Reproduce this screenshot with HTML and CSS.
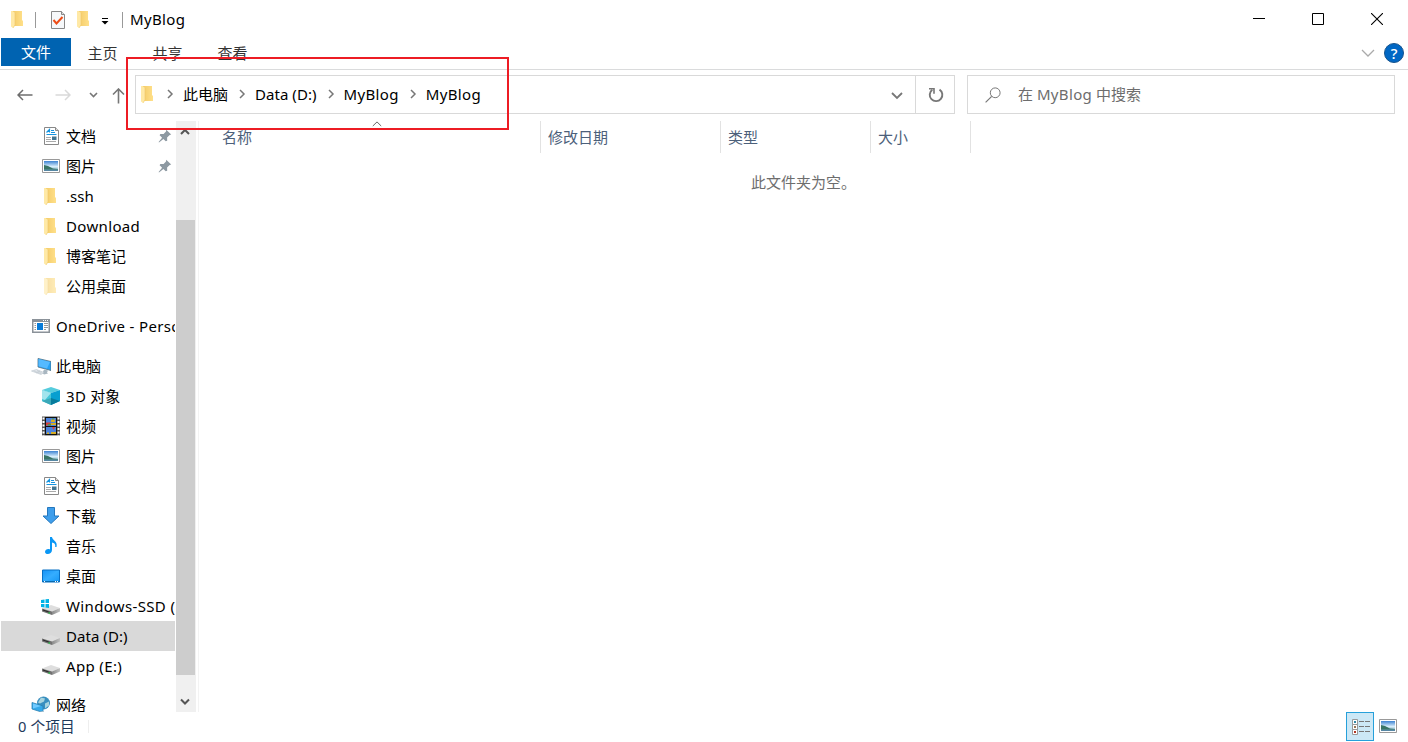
FILE: index.html
```html
<!DOCTYPE html>
<html lang="zh-CN">
<head>
<meta charset="utf-8">
<title>MyBlog</title>
<link rel="stylesheet" href="styles.css">
</head>
<body>
<svg class="defs" width="0" height="0">
  <defs>
    <linearGradient id="gold" x1="0" x2="1"><stop offset="0" stop-color="#f3ca66"/><stop offset="1" stop-color="#ffe08a"/></linearGradient>
    <linearGradient id="sky" x1="0" y1="0" x2="0" y2="1"><stop offset="0" stop-color="#3c82d2"/><stop offset=".55" stop-color="#d8eefb"/><stop offset="1" stop-color="#6fa0b5"/></linearGradient>
    <linearGradient id="screen" x1="0" y1="0" x2="1" y2="1"><stop offset="0" stop-color="#1592f5"/><stop offset=".5" stop-color="#35adff"/><stop offset="1" stop-color="#1697f5"/></linearGradient>
    <linearGradient id="metal" x1="0" x2="1"><stop offset="0" stop-color="#888"/><stop offset="1" stop-color="#c4c4c4"/></linearGradient>
  </defs>
  <symbol id="folder" viewBox="0 0 20 20"><path d="M4 2h10v9.500h1V17H4z" fill="url(#gold)"/><path d="M3 2h1.500L7 4v12l-2 3-2-1.500z" fill="#ffe9a6"/><path d="M7 4v12l-2 3" fill="none" stroke="#efc768" stroke-width=".6"/></symbol>
  <symbol id="doc" viewBox="0 0 20 20"><path d="M3.500 1.500h11l3 3v14h-14z" fill="#fff" stroke="#888"/><path d="M14.500 1.500v3h3" fill="#ddd" stroke="#888"/><path d="M5.500 6.500l3-3v3M10 4.500h3M10 6.500h4M5.500 8.500h10" fill="none" stroke="#1493df" stroke-width="1.200"/><path d="M5 11.500h5M5 13.500h5M5 15.500h10" stroke="#aaa"/><path d="M11 10.500h4.500v3.500H11z" fill="#427591"/></symbol>
  <symbol id="picture" viewBox="0 0 20 20"><path d="M1.500 3.500h17v13h-17z" fill="#fff" stroke="#999"/><path d="M3 5h14v10H3z" fill="url(#sky)"/><path d="M3 9l4 1 5 2.500 5 .5v.8H3z" fill="#397566"/><path d="M3 13.700h14V15H3z" fill="#5687a4"/></symbol>
  <symbol id="onedrive" viewBox="0 0 20 20"><path d="M1 3h18v14H1z" fill="#8b9299"/><path d="M2.500 6h15v9.500h-15z" fill="#fff"/><path d="M6 7h6v7H6z" fill="#087bd8"/><path d="M3.500 7.500h1.500m-1.500 2h1.500m-1.500 2h1.500m-1.500 2h1.500m8-6h4m-4 2h4m-4 2h4m-4 2h2" stroke="#999"/><path d="M12 4.500h1m1 0h1m1 0h1" stroke="#fff"/></symbol>
  <symbol id="pc" viewBox="0 0 20 20"><path d="M7 2.500l13 3v9L7 11z" fill="#27a1f4" stroke="#527080" stroke-width=".8"/><path d="M7.500 3l11.500 3-3 6.500-8.500-2.300z" fill="#55baff"/><path d="M13 13.500l4 1-1 2 1 1-4 1-1.500-1.500z" fill="#a8b6c0"/><path d="M.500 15l5-1.500 7.500 3-3 2z" fill="#e1e6eb" stroke="#b8c3cb" stroke-width=".6"/><path d="M3 15l7 2.500M6 14.500l5 2.500M5 17l4-2" stroke="#b9c2c9" stroke-width=".5"/></symbol>
  <symbol id="cube" viewBox="0 0 20 20"><path d="M1 4l9-3 9 3-9 3z" fill="#56ccdd"/><path d="M1 4l9 3v12l-9-4z" fill="#43c6d9"/><path d="M10 7l9-3v11l-9 4z" fill="#079fd0"/><path d="M1 4l9 3-6 7-3-1z" fill="#a2e4ed"/><path d="M1 15l9-3v7z" fill="#3aa8b8"/><path d="M10 12l9 3-9 4z" fill="#077c9c"/></symbol>
  <symbol id="video" viewBox="0 0 20 20"><path d="M1 .5h18v19H1z" fill="#555"/><path d="M4 1h12v18H4z" fill="#111"/><path d="M5 2h10v8H5zM5 11h10v7H5z" fill="#4c82dc"/><path d="M2.500 1.500v18M17.500 1.500v18" stroke="#fff" stroke-width="2" stroke-dasharray="2 1.500"/><path d="M5 6.500h4.500v3H5z" fill="#d64238"/><path d="M10 3.500h4v2.500h-4zM10 7h5v2h-5zM6 16.500h2V18H6zm4-.5h5v2h-5z" fill="#d6ad25"/><path d="M11 11h3l-1.500 3z" fill="#d64238"/><path d="M11 2.500h2v1h-2zM7 8h3v1.500H7z" fill="#3b9d52"/></symbol>
  <symbol id="download" viewBox="0 0 20 20"><path d="M6.500 1.500h7v8.500H18L10 17.500 2 10h4.500z" fill="#3e9eeb" stroke="#2477bd"/></symbol>
  <symbol id="music" viewBox="0 0 20 20"><path d="M9 1h2c0 3 6 4 4.500 10h-1.300c.6-3-1-4-3.200-4.500V14c0 5-7 5-7 2 0-2.500 3-3.500 5-2.500z" fill="#0a97f5"/></symbol>
  <symbol id="desktop" viewBox="0 0 20 20"><path d="M1.500 4h17v12h-17z" fill="url(#screen)" stroke="#0870c5"/><path d="M2 15.500h16" stroke="#086bb0"/><path d="M3 15.500h1m10 0h1m1 0h1" stroke="#fff"/></symbol>
  <symbol id="drive" viewBox="0 0 20 20"><path d="M1 12.500l9-3.500 9 3-8 3.500z" fill="#dedede"/><path d="M1 12.500l10 3v3.500L1 15.500z" fill="#727272"/><path d="M11 15.500l8-3.500v3.500L11 19z" fill="url(#metal)"/><path d="M2 13.600l7 2.300v1l-7-2.300z" fill="#252525"/><path d="M7.500 16.300h1.500v1.500h-1.500z" fill="#36c654"/></symbol>
  <symbol id="windrive" viewBox="0 0 20 20"><use href="#drive"/><path d="M0 4l3.500-.5V7H0zm4.500-.7L8 3v4H4.500zM0 8h3.500v3.500L0 11zm4.500 0H8v4l-3.500-.4z" fill="#00b3e6"/></symbol>
  <symbol id="network" viewBox="0 0 20 20"><circle cx="12.500" cy="8" r="6.500" fill="#398fbf"/><path d="M10 2.500l4 1-1 3-4 2-2-1zM14 8.500l4-2v4l-4 3z" fill="#a8d4df"/><path d="M1 7.500l11 3.500v6.500L1 14z" fill="#35a9e9" stroke="#2b81b3" stroke-width=".8"/><path d="M2 8.500l8 2.500-8 2.500z" fill="#70caff"/><path d="M8 17l4-1 1 2-3 1z" fill="#b5c1ca"/></symbol>
  <symbol id="pin" viewBox="0 0 14 14"><path d="M8.200.7l5 4.700-1.500.5-2.600 2.600.1 3.200-1.500.6-2.300-2.300L1 13.500.6 13l3.500-4.300-2.500-2.500.7-1.300 3.300.1L8 2.500z" fill="#8d99a2"/></symbol>
  <symbol id="chev-right" viewBox="0 0 8 10"><path d="M2 1l4 4-4 4" fill="none" stroke="#777" stroke-width="1.500"/></symbol>
</svg>

<div class="window">
  <header class="titlebar">
    <svg class="icon tb-folder"><use href="#folder"/></svg>
    <i class="tb-sep first"></i>
    <svg class="tb-check" width="16" height="20" viewBox="0 0 16 20"><path d="M1.500 1.500h10l3 3v14h-13z" fill="#f6f8fa" stroke="#888"/><path d="M11.500 1.500v3h3" fill="#ddd" stroke="#888"/><path d="M3.500 10l3 3.500 6-6.500" fill="none" stroke="#ed4c16" stroke-width="2"/></svg>
    <svg class="icon tb-folder2"><use href="#folder"/></svg>
    <svg class="tb-drop" width="8" height="8" viewBox="0 0 8 8"><path d="M1 1.500h6" stroke="#000"/><path d="M.5 4h7L4 7.500z"/></svg>
    <i class="tb-sep second"></i>
    <h1 class="latin">MyBlog</h1>
    <div class="controls">
      <svg width="12" height="12" viewBox="0 0 12 12"><path d="M0 5.500h12" stroke="#000"/></svg>
      <svg width="12" height="12" viewBox="0 0 12 12"><path d="M.5.5h11v11H.5z" fill="none" stroke="#000"/></svg>
      <svg width="12" height="12" viewBox="0 0 12 12"><path d="M0 0l12 12M12 0L0 12" stroke="#000" stroke-width="1.100"/></svg>
    </div>
  </header>

  <nav class="ribbon">
    <span class="tab active">文件</span><span class="tab">主页</span><span class="tab">共享</span><span class="tab">查看</span>
    <svg class="collapse" width="14" height="8" viewBox="0 0 14 8"><path d="M1 1l6 6 6-6" fill="none" stroke="#aaa" stroke-width="1.300"/></svg>
    <span class="help">?</span>
  </nav>

  <div class="toolbar">
    <div class="history">
      <svg width="16" height="12" viewBox="0 0 16 12"><path d="M15.500 6H1M6 1L1 6l5 5" fill="none" stroke="#6d6d6d" stroke-width="1.500"/></svg>
      <svg class="forward" width="16" height="12" viewBox="0 0 16 12"><path d="M.5 6H15M10 1l5 5-5 5" fill="none" stroke="#d9d9d9" stroke-width="1.500"/></svg>
      <svg class="recent" width="9" height="6" viewBox="0 0 9 6"><path d="M1 1l3.500 3.500L8 1" fill="none" stroke="#777" stroke-width="1.600"/></svg>
      <svg class="up" width="13" height="16" viewBox="0 0 13 16"><path d="M6.500 15.500V1M1 6.500L6.500 1 12 6.500" fill="none" stroke="#777" stroke-width="1.600"/></svg>
    </div>
    <div class="address">
      <svg class="icon"><use href="#folder"/></svg>
      <svg class="crumb c1"><use href="#chev-right"/></svg><span class="place">此电脑</span>
      <svg class="crumb"><use href="#chev-right"/></svg><span class="place tight">Data (D:)</span>
      <svg class="crumb"><use href="#chev-right"/></svg><span class="place latin">MyBlog</span>
      <svg class="crumb"><use href="#chev-right"/></svg><span class="place latin">MyBlog</span>
      <svg class="addr-drop" width="12" height="8" viewBox="0 0 12 8"><path d="M1 1l5 5 5-5" fill="none" stroke="#777" stroke-width="1.800"/></svg>
      <div class="refresh"><svg width="16" height="16" viewBox="0 0 16 16"><path d="M11.500 2.600A6.300 6.300 0 1 1 4.300 2.800" fill="none" stroke="#777" stroke-width="1.900"/><path d="M1 1.700h5v5" fill="none" stroke="#777" stroke-width="1.600"/></svg></div>
    </div>
    <div class="search">
      <svg width="16" height="16" viewBox="0 0 16 16"><circle cx="10.200" cy="5.800" r="4.900" fill="none" stroke="#777"/><path d="M6.700 9.300L.6 15.400" stroke="#777" stroke-width="1.200"/></svg>
      <span class="hint">在 <span class="latin">MyBlog</span> 中搜索</span>
    </div>
  </div>

  <main class="body">
    <aside class="tree">
      <div class="row"><svg class="icon"><use href="#doc"/></svg><span>文档</span><svg class="pin"><use href="#pin"/></svg></div>
      <div class="row"><svg class="icon"><use href="#picture"/></svg><span>图片</span><svg class="pin"><use href="#pin"/></svg></div>
      <div class="row"><svg class="icon"><use href="#folder"/></svg><span class="tight">.ssh</span></div>
      <div class="row"><svg class="icon"><use href="#folder"/></svg><span class="latin">Download</span></div>
      <div class="row"><svg class="icon"><use href="#folder"/></svg><span>博客笔记</span></div>
      <div class="row"><svg class="icon faded"><use href="#folder"/></svg><span>公用桌面</span></div>
      <div class="row root"><svg class="icon"><use href="#onedrive"/></svg><span class="latin">OneDrive - Personal</span></div>
      <div class="row root"><svg class="icon"><use href="#pc"/></svg><span>此电脑</span></div>
      <div class="row"><svg class="icon"><use href="#cube"/></svg><span><span class="latin">3D</span> 对象</span></div>
      <div class="row"><svg class="icon"><use href="#video"/></svg><span>视频</span></div>
      <div class="row"><svg class="icon"><use href="#picture"/></svg><span>图片</span></div>
      <div class="row"><svg class="icon"><use href="#doc"/></svg><span>文档</span></div>
      <div class="row"><svg class="icon"><use href="#download"/></svg><span>下载</span></div>
      <div class="row"><svg class="icon"><use href="#music"/></svg><span>音乐</span></div>
      <div class="row"><svg class="icon"><use href="#desktop"/></svg><span>桌面</span></div>
      <div class="row"><svg class="icon"><use href="#windrive"/></svg><span class="latin">Windows-SSD (C:)</span></div>
      <div class="row selected"><svg class="icon"><use href="#drive"/></svg><span class="tight">Data (D:)</span></div>
      <div class="row"><svg class="icon"><use href="#drive"/></svg><span class="latin">App (E:)</span></div>
      <div class="row root last"><svg class="icon"><use href="#network"/></svg><span>网络</span></div>
    </aside>
    <div class="scrollbar">
      <svg width="10" height="8" viewBox="0 0 10 8"><path d="M1 6l4-4 4 4" fill="none" stroke="#555" stroke-width="2"/></svg>
      <div class="thumb"></div>
      <svg width="10" height="8" viewBox="0 0 10 8"><path d="M1 1.500l4 4 4-4" fill="none" stroke="#555" stroke-width="2"/></svg>
    </div>
    <section class="files">
      <div class="columns"><span class="name">名称<svg class="sort" width="10" height="6" viewBox="0 0 10 6"><path d="M.8 5L5 .9 9.200 5" fill="none" stroke="#666"/></svg></span><span class="date">修改日期</span><span class="type">类型</span><span class="size">大小</span></div>
      <p class="empty">此文件夹为空。</p>
    </section>
  </main>

  <footer class="status">
    <span class="count"><span class="latin">0</span> 个项目</span><i></i>
    <div class="view active"><svg width="28" height="29" viewBox="0 0 28 29"><path d="M6.500 7.500h5v5h-5zM6.500 12.500h5v5h-5zM6.500 17.500h5v5h-5z" fill="#fff" stroke="#999"/><path d="M8 9h2v2H8z" fill="#3187a5"/><path d="M8 14h2v2H8z" fill="#987554"/><path d="M8 19h2v2H8z" fill="#b33624"/><path d="M13 9.500h5m1 0h5m-11 5h5m1 0h5m-11 5h5m1 0h5" stroke="#777"/></svg></div>
    <svg class="icon thumbs"><use href="#picture"/></svg>
  </footer>
  <div class="highlight"></div>
</div>
</body>
</html>
```
FILE: styles.css
```css
* { box-sizing: border-box; }
body { margin: 0; background: #fff; font: 15px/20px "Noto Sans", "Noto Sans CJK SC", sans-serif; color: #000; overflow: hidden; }
svg { display: block; flex: none; }
.defs { position: absolute; }
.window { position: relative; width: 1408px; height: 742px; display: flex; flex-direction: column; overflow: hidden; }
.latin { letter-spacing: .35px; }
.tight { letter-spacing: .05px; }
.icon { width: 20px; height: 20px; }

.titlebar { height: 38px; display: flex; align-items: center; padding: 1px 25px 0 8px; flex: none; }
.tb-sep { width: 1px; height: 16px; background: #999; }
.tb-sep.first { margin-left: 7px; }
.tb-check { margin-left: 14px; }
.tb-folder2 { margin-left: 8px; }
.tb-drop { margin-left: 7px; margin-top: 3px; }
.tb-sep.second { margin-left: 13px; }
.titlebar .icon { margin-bottom: 1px; }
h1 { font-size: 15px; font-weight: 400; margin: 0 0 2px 7px; }
.controls { margin: 0 0 2px auto; display: flex; gap: 47px; }

.ribbon { height: 32px; display: flex; align-items: flex-start; border-bottom: 1px solid #dadbdc; padding-left: 1px; flex: none; color: #333; }
.tab { width: 65px; height: 28px; line-height: 31px; text-align: center; }
.tab.active { width: 70px; margin-right: -1px; line-height: 29px; background: #0063b1; color: #fff; }
.collapse { margin: 11px 9px 0 auto; }
.help { width: 20px; height: 20px; margin: 5px 4px 0 0; border-radius: 50%; background: #0067c4; border: 1px solid #17548d; color: #fff; text-align: center; font-size: 15px; line-height: 18px; font-weight: 500; }

.toolbar { height: 51px; padding: 5px 13px 0 0; display: flex; flex: none; }
.history { width: 135px; height: 39px; display: flex; align-items: center; padding-left: 17px; }
.forward { margin-left: 22px; }
.recent { margin-left: 18px; }
.up { margin: 3px 0 0 14px; }
.address { width: 820px; height: 39px; border: 1px solid #d9d9d9; display: flex; align-items: center; padding-left: 2px; }
.address .icon { margin-bottom: 2px; }
.place, .hint { margin-bottom: 2px; }
.crumb { width: 8px; height: 10px; margin: -2px 9px 0 10px; }
.crumb.c1 { margin-left: 8px; }
.addr-drop { margin: 2px 12px 0 auto; }
.refresh { width: 39px; height: 37px; border-left: 1px solid #d9d9d9; display: flex; align-items: center; justify-content: center; padding-left: 2px; }
.search { width: 428px; height: 39px; border: 1px solid #d9d9d9; margin-left: 12px; display: flex; align-items: center; gap: 17px; padding-left: 17px; color: #6d6d6d; }

.body { height: 591px; display: flex; flex: none; }
.tree { width: 176px; overflow: hidden; padding: 0 1px; }
.row { width: 174px; height: 30px; padding-left: 40px; display: flex; align-items: center; gap: 5px; white-space: nowrap; overflow: hidden; }
.row.root { padding-left: 30px; margin-top: 10px; }
.row.last { margin-top: 9px; }
.row.selected { background: #d9d9d9; }
.faded { opacity: .6; }
.pin { width: 14px; height: 14px; margin: 0 3px 0 auto; }
.scrollbar { width: 20px; background: #f0f0f0; display: flex; flex-direction: column; align-items: center; padding: 7px 1px 6px 0; }
.scrollbar svg { margin-right: 1px; }
.thumb { width: 19px; height: 455px; margin: 84px 0 auto; background: #cdcdcd; flex: none; }
.files { flex: 1; margin-left: 2px; border-left: 1px solid #f3f3f3; }
.columns { display: flex; height: 32px; line-height: 33px; color: #4c607a; }
.columns > span { border-right: 1px solid #e2e2e2; padding-left: 7px; position: relative; }
.columns .name { width: 342px; padding-left: 23px; }
.columns .date { width: 180px; }
.columns .type { width: 150px; }
.columns .size { width: 100px; }
.sort { position: absolute; left: 173px; top: 0; }
.empty { margin: 19px 0 0 552px; color: #6d6d6d; }

.status { height: 30px; display: flex; align-items: flex-start; padding-left: 18px; flex: none; color: #1e395b; }
.count { font-size: 14.7px; margin-top: 4px; width: 70px; white-space: nowrap; }
.status i { width: 1px; height: 13px; background: #eee; margin-top: 8px; }
.view { width: 28px; height: 29px; margin-left: auto; background: #cce8f6; outline: 1px solid #26a0da; outline-offset: -1px; }
.thumbs { margin: 4px 10px 0 4px; }
.highlight { position: absolute; left: 126px; top: 57px; width: 383px; height: 73px; border: 2px solid #ed1c24; }
```
